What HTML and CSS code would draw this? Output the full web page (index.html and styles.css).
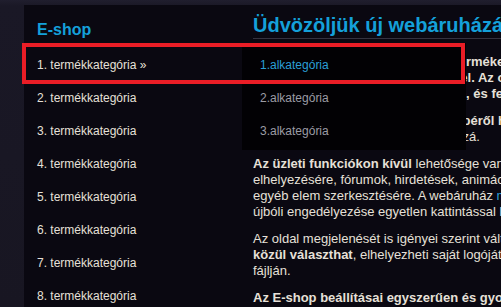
FILE: index.html
```html
<!DOCTYPE html>
<html lang="hu">
<head>
<meta charset="utf-8">
<title>E-shop</title>
<link rel="stylesheet" href="styles.css">
</head>
<body>
<div class="page">
  <aside class="sidebar">
    <h2 class="side-title">E-shop</h2>
    <ul class="cat-list">
      <li class="cat">
        <a class="cat-link" href="#">1. termékkategória &raquo;</a>
        <ul class="sub-menu">
          <li class="sub"><a class="sub-link is-hover" href="#">1.alkategória</a></li>
          <li class="sub"><a class="sub-link" href="#">2.alkategória</a></li>
          <li class="sub"><a class="sub-link" href="#">3.alkategória</a></li>
        </ul>
      </li>
      <li class="cat"><a class="cat-link" href="#">2. termékkategória</a></li>
      <li class="cat"><a class="cat-link" href="#">3. termékkategória</a></li>
      <li class="cat"><a class="cat-link" href="#">4. termékkategória</a></li>
      <li class="cat"><a class="cat-link" href="#">5. termékkategória</a></li>
      <li class="cat"><a class="cat-link" href="#">6. termékkategória</a></li>
      <li class="cat"><a class="cat-link" href="#">7. termékkategória</a></li>
      <li class="cat"><a class="cat-link" href="#">8. termékkategória</a></li>
    </ul>
  </aside>
  <main class="content">
    <h1 class="title">Üdvözöljük új webáruházában!</h1>
    <p class="text bold">Webáruházában gyorsan kínálja termékeit a vásárlóknak<br>szolgáltatásait interneten, képekkel. Az oldal tartalmát és<br>árait bármikor módosíthatja online, és feltöltheti újdonságait.</p>
    <p class="text"><b>Az összes termék adatlapjának képéről helyettesítő szöveget</b><br>információt, árat és képet fűzhet hozzá.</p>
    <p class="text"><b>Az üzleti funkciókon kívül</b> lehetősége van tartalmi oldalak<br>elhelyezésére, fórumok, hirdetések, animációk, galériák és<br>egyéb elem szerkesztésére. A webáruház <a class="link" href="#">modulok</a> kikapcsolása és<br>újbóli engedélyezése egyetlen kattintással lehetséges.</p>
    <p class="text">Az oldal megjelenését is igényei szerint változtathatja: <b>számos sablon</b><br><b>közül választhat</b>, elhelyezheti saját logóját és módosíthatja a stílus<br>fájlján.</p>
    <p class="text bold">Az E-shop beállításai egyszerűen és gyorsan elvégezhetők.</p>
  </main>
</div>
<div class="highlight"></div>
</body>
</html>
```

FILE: styles.css
```css
html, body {
  margin: 0;
  padding: 0;
  height: 307px;
  overflow: hidden;
}

body {
  background: #1a1826;
  background-image: linear-gradient(180deg, #201e2e 0, #1a1826 6px, #181622 100%);
  font-family: "Liberation Sans", Arial, sans-serif;
  font-size: 12px;
  color: #e6e0d8;
  position: relative;
}

.page {
  display: flex;
  width: 820px;
  padding: 5px 0 0 24px;
  height: 302px;
}

.sidebar {
  flex: none;
  width: 218px;
  background: #0a0811;
  padding-top: 15px;
  position: relative;
  z-index: 2;
}

.side-title {
  margin: 0 0 0 13px;
  font-size: 16px;
  line-height: 20px;
  font-weight: bold;
  color: #14a0da;
}

.cat-list {
  list-style: none;
  margin: 9px 0 0;
  padding: 0;
}

.cat {
  position: relative;
  height: 33px;
  line-height: 33px;
  padding-left: 13px;
}

.cat-link {
  color: #e6e0d8;
  text-decoration: none;
  white-space: nowrap;
}

.sub-menu {
  position: absolute;
  left: 218px;
  top: -6px;
  width: 224px;
  margin: 0;
  padding: 6px 0 2px;
  list-style: none;
  background: #020104;
  z-index: 2;
}

.sub {
  height: 33px;
  line-height: 33px;
  padding-left: 18px;
}

.sub-link {
  color: #9c9ca4;
  text-decoration: none;
}

.sub-link.is-hover {
  color: #2a9fd6;
}

.content {
  flex: 1;
  background: #0a0811;
  padding: 8px 0 0 11px;
  position: relative;
  z-index: 1;
}

.title {
  margin: 0 0 15px;
  padding-bottom: 1px;
  font-size: 20px;
  line-height: 24px;
  font-weight: bold;
  color: #14a0da;
  white-space: nowrap;
  border-bottom: 1px solid #34323f;
}

.text {
  margin: 0 0 11px;
  font-size: 13px;
  line-height: 16px;
  white-space: nowrap;
}

.text.bold {
  font-weight: bold;
}

.link {
  color: #2a9fd6;
  text-decoration: none;
}

.highlight {
  position: absolute;
  left: 22px;
  top: 43px;
  width: 443px;
  height: 41px;
  border: 4px solid #ea1d26;
  box-sizing: border-box;
  z-index: 3;
}
```
